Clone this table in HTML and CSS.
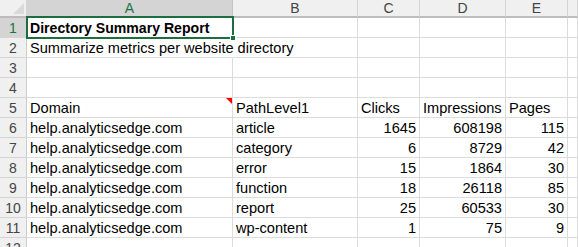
FILE: index.html
```html
<!DOCTYPE html>
<html>
<head>
<meta charset="utf-8">
<link rel="stylesheet" href="styles.css">
</head>
<body>
<div class="sheet">
  <div class="corner"></div>
  <div class="colhead sel">A</div>
  <div class="colhead">B</div>
  <div class="colhead">C</div>
  <div class="colhead">D</div>
  <div class="colhead">E</div>
  <div class="colhead"></div>

  <div class="rowhead sel">1</div>
  <div class="cell bold active">Directory Summary Report<span class="handle"></span></div>
  <div class="cell"></div><div class="cell"></div><div class="cell"></div><div class="cell"></div><div class="cell"></div>

  <div class="rowhead">2</div>
  <div class="cell over">Summarize metrics per website directory</div>
  <div class="cell"></div><div class="cell"></div><div class="cell"></div><div class="cell"></div><div class="cell"></div>

  <div class="rowhead">3</div>
  <div class="cell"></div><div class="cell"></div><div class="cell"></div><div class="cell"></div><div class="cell"></div><div class="cell"></div>

  <div class="rowhead">4</div>
  <div class="cell"></div><div class="cell"></div><div class="cell"></div><div class="cell"></div><div class="cell"></div><div class="cell"></div>

  <div class="rowhead">5</div>
  <div class="cell comment">Domain</div>
  <div class="cell">PathLevel1</div>
  <div class="cell">Clicks</div>
  <div class="cell">Impressions</div>
  <div class="cell">Pages</div>
  <div class="cell"></div>

  <div class="rowhead">6</div>
  <div class="cell">help.analyticsedge.com</div><div class="cell">article</div>
  <div class="cell num">1645</div><div class="cell num">608198</div><div class="cell num">115</div><div class="cell"></div>

  <div class="rowhead">7</div>
  <div class="cell">help.analyticsedge.com</div><div class="cell">category</div>
  <div class="cell num">6</div><div class="cell num">8729</div><div class="cell num">42</div><div class="cell"></div>

  <div class="rowhead">8</div>
  <div class="cell">help.analyticsedge.com</div><div class="cell">error</div>
  <div class="cell num">15</div><div class="cell num">1864</div><div class="cell num">30</div><div class="cell"></div>

  <div class="rowhead">9</div>
  <div class="cell">help.analyticsedge.com</div><div class="cell">function</div>
  <div class="cell num">18</div><div class="cell num">26118</div><div class="cell num">85</div><div class="cell"></div>

  <div class="rowhead">10</div>
  <div class="cell">help.analyticsedge.com</div><div class="cell">report</div>
  <div class="cell num">25</div><div class="cell num">60533</div><div class="cell num">30</div><div class="cell"></div>

  <div class="rowhead">11</div>
  <div class="cell">help.analyticsedge.com</div><div class="cell">wp-content</div>
  <div class="cell num">1</div><div class="cell num">75</div><div class="cell num">9</div><div class="cell"></div>

  <div class="rowhead">12</div>
  <div class="cell"></div><div class="cell"></div><div class="cell"></div><div class="cell"></div><div class="cell"></div><div class="cell"></div>
</div>
</body>
</html>
```

FILE: styles.css
```css
* { box-sizing: border-box; }
html, body { margin: 0; padding: 0; background: #fff; overflow: hidden; }
body { width: 578px; height: 247px; }

.sheet {
  display: grid;
  grid-template-columns: 27px 206px 125px 62px 86px 62px 10px;
  grid-template-rows: 18px repeat(12, 20px);
  font-family: "Liberation Sans", Arial, sans-serif;
  font-size: 14.6px;
  color: #000;
}

.corner {
  background: #f0f0f0;
  border-right: 1px solid #d4d4d4;
  border-bottom: 2px solid #bdbdbd;
  position: relative;
}
.corner::after {
  content: "";
  position: absolute;
  right: 2px;
  bottom: 2px;
  width: 0; height: 0;
  border-left: 11px solid transparent;
  border-bottom: 11px solid #dadada;
}

.colhead {
  background: #f0f0f0;
  border-right: 1px solid #d4d4d4;
  border-bottom: 2px solid #bdbdbd;
  color: #444;
  font-size: 14px;
  text-align: center;
  line-height: 16px;
}
.colhead.sel {
  background: #d4d4d4;
  color: #1a7343;
  border-right-color: #c4c4c4;
}

.rowhead {
  background: #f0f0f0;
  border-right: 1px solid #cdcdcd;
  border-bottom: 1px solid #d4d4d4;
  color: #444;
  font-size: 14px;
  text-align: center;
  line-height: 20px;
}
.rowhead.sel {
  background: #d4d4d4;
  color: #1a7343;
}

.cell {
  border-right: 1px solid #dcdcdc;
  border-bottom: 1px solid #dcdcdc;
  padding: 0 3px;
  line-height: 21px;
  white-space: nowrap;
  position: relative;
}
.cell.over { overflow: visible; z-index: 1; border-right-color: transparent; }
.cell.num { text-align: right; padding-right: 3px; }
.cell.bold { font-weight: bold; font-size: 14.1px; }

.cell.active::before {
  content: "";
  position: absolute;
  left: -1px;
  top: -2px;
  right: -2px;
  bottom: -2px;
  border: 2px solid #1d6d40;
  pointer-events: none;
}
.handle {
  position: absolute;
  right: -4px;
  bottom: -4px;
  width: 6px;
  height: 6px;
  background: #1d6d40;
  border: 1px solid #fff;
  z-index: 2;
}

.cell.comment::after {
  content: "";
  position: absolute;
  right: 0;
  top: 0;
  width: 0; height: 0;
  border-top: 6px solid #ff0000;
  border-left: 6px solid transparent;
}
```
